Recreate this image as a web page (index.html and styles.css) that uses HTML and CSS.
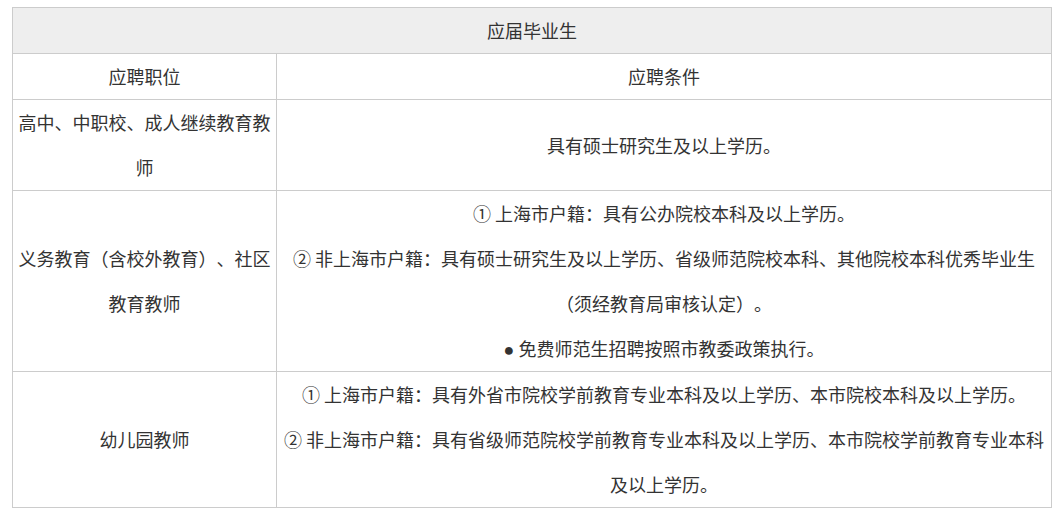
FILE: index.html
```html
<!DOCTYPE html>
<html lang="zh-CN">
<head>
<meta charset="utf-8">
<title>应届毕业生</title>
<link rel="stylesheet" href="styles.css">
</head>
<body>
<table class="req-table">
  <colgroup>
    <col class="col-pos">
    <col class="col-cond">
  </colgroup>
  <tr class="head-row">
    <th colspan="2">应届毕业生</th>
  </tr>
  <tr>
    <td>应聘职位</td>
    <td>应聘条件</td>
  </tr>
  <tr>
    <td>高中、中职校、成人继续教育教师</td>
    <td>具有硕士研究生及以上学历。</td>
  </tr>
  <tr>
    <td>义务教育（含校外教育）、社区教育教师</td>
    <td>
      <p>① 上海市户籍：具有公办院校本科及以上学历。</p>
      <p>② 非上海市户籍：具有硕士研究生及以上学历、省级师范院校本科、其他院校本科优秀毕业生（须经教育局审核认定）。</p>
      <p><span class="dot">●</span> 免费师范生招聘按照市教委政策执行。</p>
    </td>
  </tr>
  <tr>
    <td>幼儿园教师</td>
    <td>
      <p>① 上海市户籍：具有外省市院校学前教育专业本科及以上学历、本市院校本科及以上学历。</p>
      <p>② 非上海市户籍：具有省级师范院校学前教育专业本科及以上学历、本市院校学前教育专业本科及以上学历。</p>
    </td>
  </tr>
</table>
</body>
</html>
```

FILE: styles.css
```css
html, body {
  margin: 0;
  padding: 0;
  background: #ffffff;
}

body {
  padding: 7px 0 0 12px;
  font-family: "Noto Sans CJK SC", "Noto Sans", sans-serif;
  font-size: 18px;
  color: #333333;
}

.req-table {
  border-collapse: collapse;
  width: 1040px;
  table-layout: fixed;
  text-spacing-trim: space-all;
}

.col-pos {
  width: 264px;
}

.req-table th,
.req-table td {
  border: 1px solid #cccccc;
  padding: 0 5px;
  line-height: 45px;
  text-align: center;
  vertical-align: middle;
  font-weight: normal;
}

.head-row th {
  background: #eeeeee;
}

.req-table p {
  margin: 0;
}

.dot {
  font-family: "Liberation Sans", sans-serif;
  line-height: 0;
}
```
